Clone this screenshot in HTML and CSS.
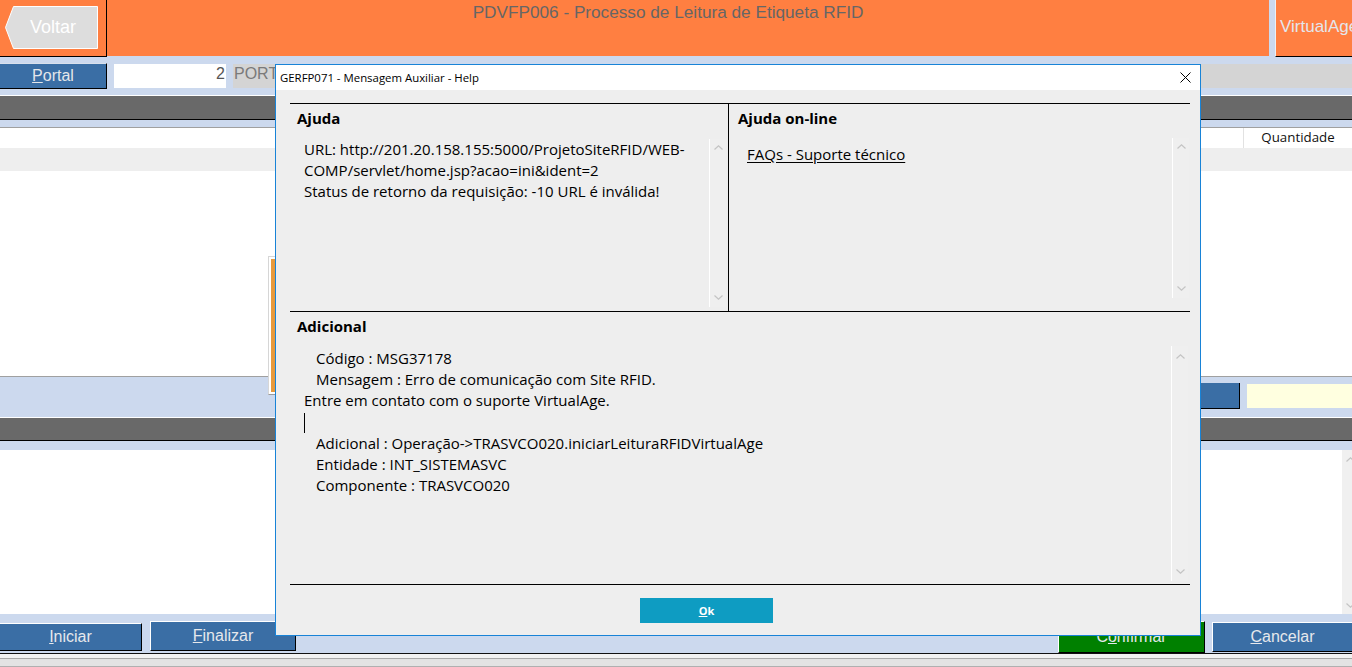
FILE: index.html
```html
<!DOCTYPE html>
<html lang="pt-BR">
<head>
<meta charset="utf-8">
<title>PDVFP006 - Processo de Leitura de Etiqueta RFID</title>
<link rel="stylesheet" href="styles.css">
</head>
<body>
<div class="app">
  <header class="topbar">
    <div class="back-block">
      <div class="back-btn">
        <svg class="back-shape" width="93" height="43" viewBox="0 0 93 43"><polygon points="8.5,0.5 92.5,0.5 92.5,42.5 8.5,42.5 0.5,21.5" fill="#dddddd" stroke="#ffffff" stroke-width="1"/></svg>
        <span class="back-label">Voltar</span>
      </div>
    </div>
    <div class="title-block"><h1 class="page-title">PDVFP006 - Processo de Leitura de Etiqueta RFID</h1></div>
    <div class="brand-block">VirtualAge</div>
  </header>

  <div class="portal-row">
    <div class="portal-btn"><u>P</u>ortal</div>
    <div class="num-field">2</div>
    <div class="desc-field">PORTAL</div>
  </div>

  <div class="dark-bar"></div>

  <div class="grid">
    <div class="grid-head"><div class="col-qty">Quantidade</div></div>
    <div class="grid-row"></div>
    <div class="grid-body"></div>
  </div>

  <div class="mid-row">
    <div class="mid-btn"></div>
    <div class="mid-input"></div>
  </div>

  <div class="dark-bar dark-bar-2"></div>

  <div class="list">
    <div class="list-scroll">
      <svg width="9" height="5" viewBox="0 0 9 5"><polyline points="0.5,4.5 4.5,0.8 8.5,4.5" fill="none" stroke="#c4c4c4" stroke-width="1.2"/></svg>
      <svg width="9" height="5" viewBox="0 0 9 5"><polyline points="0.5,0.5 4.5,4.2 8.5,0.5" fill="none" stroke="#c4c4c4" stroke-width="1.2"/></svg>
    </div>
  </div>

  <div class="actions">
    <div class="act-btn btn-iniciar"><u>I</u>niciar</div>
    <div class="act-btn btn-finalizar"><u>F</u>inalizar</div>
    <div class="act-spacer"></div>
    <div class="act-btn btn-confirmar">C<u>o</u>nfirmar</div>
    <div class="act-btn btn-cancelar"><u>C</u>ancelar</div>
  </div>

  <div class="statusbar"></div>
</div>

<div class="orange-panel"><div class="orange-fill"></div></div>

<div class="dialog">
  <div class="dlg-title">
    <span class="dlg-caption">GERFP071 - Mensagem Auxiliar - Help</span>
    <svg class="dlg-close" width="11" height="11" viewBox="0 0 11 11"><path d="M0.5 0.5 L10.5 10.5 M10.5 0.5 L0.5 10.5" stroke="#000" stroke-width="1" fill="none"/></svg>
  </div>
  <div class="dlg-body">
    <div class="panes">
      <section class="pane pane-left">
        <h2 class="sec-title">Ajuda</h2>
        <div class="textbox textbox-left">
          <div class="text-content">URL: http://201.20.158.155:5000/ProjetoSiteRFID/WEB-<br>COMP/servlet/home.jsp?acao=ini&amp;ident=2<br>Status de retorno da requisição: -10 URL é inválida!</div>
          <div class="vscroll">
            <svg width="9" height="5" viewBox="0 0 9 5"><polyline points="0.5,4.5 4.5,0.8 8.5,4.5" fill="none" stroke="#c4c4c4" stroke-width="1.2"/></svg>
            <svg width="9" height="5" viewBox="0 0 9 5"><polyline points="0.5,0.5 4.5,4.2 8.5,0.5" fill="none" stroke="#c4c4c4" stroke-width="1.2"/></svg>
          </div>
        </div>
      </section>
      <section class="pane pane-right">
        <h2 class="sec-title sec-title-right">Ajuda on-line</h2>
        <div class="textbox textbox-right">
          <div class="text-content link-content"><a class="faq-link" href="#">FAQs - Suporte técnico</a></div>
          <div class="vscroll">
            <svg width="9" height="5" viewBox="0 0 9 5"><polyline points="0.5,4.5 4.5,0.8 8.5,4.5" fill="none" stroke="#c4c4c4" stroke-width="1.2"/></svg>
            <svg width="9" height="5" viewBox="0 0 9 5"><polyline points="0.5,0.5 4.5,4.2 8.5,0.5" fill="none" stroke="#c4c4c4" stroke-width="1.2"/></svg>
          </div>
        </div>
      </section>
    </div>
    <section class="extra">
      <h2 class="sec-title extra-title">Adicional</h2>
      <div class="textbox textbox-extra">
        <div class="text-content extra-content">
          <div class="ind">Código : MSG37178</div>
          <div class="ind">Mensagem : Erro de comunicação com Site RFID.</div>
          <div>Entre em contato com o suporte VirtualAge.</div>
          <div><span class="caret"></span></div>
          <div class="ind">Adicional : Operação-&gt;TRASVCO020.iniciarLeituraRFIDVirtualAge</div>
          <div class="ind">Entidade : INT_SISTEMASVC</div>
          <div class="ind">Componente : TRASVCO020</div>
        </div>
        <div class="vscroll vscroll-extra">
          <svg width="9" height="5" viewBox="0 0 9 5"><polyline points="0.5,4.5 4.5,0.8 8.5,4.5" fill="none" stroke="#c4c4c4" stroke-width="1.2"/></svg>
          <svg width="9" height="5" viewBox="0 0 9 5"><polyline points="0.5,0.5 4.5,4.2 8.5,0.5" fill="none" stroke="#c4c4c4" stroke-width="1.2"/></svg>
        </div>
      </div>
    </section>
    <div class="dlg-foot">
      <div class="ok-btn"><u>O</u>k</div>
    </div>
  </div>
</div>
</body>
</html>
```

FILE: styles.css
```css
* { box-sizing: border-box; margin: 0; padding: 0; }

html, body {
  width: 1352px;
  height: 667px;
  overflow: hidden;
}

body {
  position: relative;
  font-family: "Liberation Sans", Arial, sans-serif;
  background: #ccd9ee;
}

.app {
  width: 1352px;
  height: 667px;
  display: flex;
  flex-direction: column;
  background: #ccd9ee;
  overflow: hidden;
}

/* ---------- header ---------- */
.topbar {
  display: flex;
  height: 57px;
  flex: none;
}

.back-block {
  width: 107px;
  height: 57px;
  background: #ff7f41;
  border-right: 1px solid #000;
  border-bottom: 1px solid #000;
  padding: 6px 0 0 5px;
}

.back-btn {
  position: relative;
  width: 93px;
  height: 43px;
  display: flex;
  align-items: center;
  justify-content: center;
}

.back-shape {
  position: absolute;
  left: 0;
  top: 0;
}

.back-label {
  position: relative;
  color: #ffffff;
  font-size: 18px;
  padding-left: 3px;
}

.title-block {
  flex: 1;
  height: 56px;
  background: #ff7f41;
  padding: 2px 40px 0 0;
  text-align: center;
}

.page-title {
  font-size: 17.2px;
  font-weight: normal;
  color: #666666;
  line-height: 20px;
}

.brand-block {
  width: 77px;
  height: 57px;
  margin-left: 6px;
  background: #ff7f41;
  border-left: 1px solid #eef0f4;
  border-bottom: 1px solid #000;
  padding-left: 4px;
  font-size: 17px;
  line-height: 54px;
  color: #e4e6ec;
  white-space: nowrap;
  overflow: hidden;
}

/* ---------- portal row ---------- */
.portal-row {
  display: flex;
  align-items: flex-start;
  height: 26px;
  margin-top: 6px;
  flex: none;
}

.portal-btn {
  width: 107px;
  height: 26px;
  background: #3a6ea5;
  border-top: 1px solid #d8e0ec;
  border-right: 1px solid #000;
  border-bottom: 1px solid #000;
  color: #e4e6ea;
  font-size: 16px;
  line-height: 24px;
  text-align: center;
}

.num-field {
  width: 112px;
  height: 24px;
  margin: 1px 0 0 7px;
  background: #ffffff;
  color: #555555;
  font-size: 16px;
  line-height: 20px;
  text-align: right;
  padding-right: 1px;
}

.desc-field {
  flex: 1;
  height: 24px;
  margin: 1px 0 0 7px;
  background: #d4d4d4;
  color: #7a7a7a;
  font-size: 16px;
  line-height: 20px;
  padding-left: 1px;
}

/* ---------- bars & grid ---------- */
.dark-bar {
  height: 25px;
  margin-top: 6px;
  flex: none;
  background: #696969;
  border-top: 1px solid #ffffff;
  border-bottom: 1px solid #000000;
}

.dark-bar-2 {
  height: 24px;
  margin-top: 0;
}

.grid {
  height: 250px;
  margin-top: 7px;
  flex: none;
  display: flex;
  flex-direction: column;
  background: #ffffff;
  border-top: 1px solid #a0a0a0;
  border-bottom: 1px solid #a0a0a0;
}

.grid-head {
  height: 20px;
  display: flex;
  justify-content: flex-end;
}

.col-qty {
  width: 109px;
  border-left: 1px solid #e2e2e2;
  font-family: "Open Sans", "Noto Sans", sans-serif;
  font-size: 13.3px;
  line-height: 19px;
  text-align: center;
  color: #111;
}

.grid-row {
  height: 23px;
  background: #eeeeee;
}

.grid-body { flex: 1; }

.mid-row {
  height: 40px;
  flex: none;
  display: flex;
  justify-content: flex-end;
  align-items: flex-start;
}

.mid-btn {
  width: 90px;
  height: 26px;
  margin-top: 6px;
  background: #3a6ea5;
  border-right: 1px solid #000;
  border-bottom: 1px solid #000;
}

.mid-input {
  width: 105px;
  height: 24px;
  margin: 7px 0 0 7px;
  background: #ffffe0;
}

.list {
  height: 164px;
  margin-top: 9px;
  margin-right: -7px;
  flex: none;
  display: flex;
  justify-content: flex-end;
  background: #ffffff;
}

.list-scroll {
  width: 17px;
  background: #f0f0f0;
  display: flex;
  flex-direction: column;
  justify-content: space-between;
  align-items: center;
  padding: 7px 0 6px;
}

/* ---------- action buttons ---------- */
.actions {
  height: 32px;
  margin-top: 7px;
  flex: none;
  display: flex;
  align-items: flex-start;
}

.act-btn {
  background: #3a6ea5;
  border-top: 1px solid #ffffff;
  border-left: 1px solid #ffffff;
  border-right: 1px solid #000000;
  border-bottom: 1px solid #000000;
  color: #e6e8ec;
  font-size: 16px;
  text-align: center;
}

.btn-iniciar {
  width: 142px;
  height: 28px;
  margin-top: 2px;
  line-height: 26px;
  border-left: none;
}

.btn-finalizar {
  width: 146px;
  height: 30px;
  margin-left: 8px;
  line-height: 28px;
}

.act-spacer { flex: 1; }

.btn-confirmar {
  width: 147px;
  height: 32px;
  background: #008000;
  line-height: 30px;
}

.btn-cancelar {
  width: 140px;
  height: 30px;
  margin: 1px 0 0 7px;
  line-height: 28px;
  border-right: none;
}

.statusbar {
  height: 14px;
  flex: none;
  border-top: 1px solid #111111;
  background: linear-gradient(#f2f2f2 0 4px, #a8a8a8 4px 5px, #e3e3e3 5px 12px, #b0b0b0 12px 13px);
}

/* ---------- orange panel behind the dialog ---------- */
.orange-panel {
  position: absolute;
  left: 268px;
  top: 256px;
  width: 60px;
  height: 139px;
  background: #ffffff;
  border: 1px solid #d6d6d6;
  border-bottom-color: #9a9a9a;
  padding: 2px;
}

.orange-fill {
  width: 100%;
  height: 100%;
  background: #e89a3c;
}

/* ---------- dialog ---------- */
.dialog {
  position: absolute;
  left: 275px;
  top: 64px;
  width: 926px;
  height: 572px;
  border: 1px solid #1883d7;
  background: #eeeeee;
  font-family: "Open Sans", "Noto Sans", sans-serif;
  color: #000;
  display: flex;
  flex-direction: column;
}

.dlg-title {
  height: 25px;
  flex: none;
  background: #ffffff;
  display: flex;
  align-items: center;
  padding-left: 4px;
}

.dlg-caption {
  font-size: 11.4px;
  color: #000;
}

.dlg-close {
  margin-left: auto;
  margin-right: 9px;
}

.dlg-body {
  flex: 1;
  display: flex;
  flex-direction: column;
  padding: 13px 10px 0 14px;
}

.panes {
  height: 209px;
  flex: none;
  display: flex;
  border-top: 1px solid #000;
  border-bottom: 1px solid #000;
}

.pane {
  display: flex;
  flex-direction: column;
}

.pane-left {
  width: 439px;
  border-right: 1px solid #000;
  padding: 4px 2px 0 7px;
}

.pane-right {
  flex: 1;
  padding: 4px 1px 0 9px;
}

.sec-title {
  font-size: 15px;
  font-weight: bold;
  line-height: 21px;
  margin-bottom: 10px;
}

.sec-title-right { margin-bottom: 9px; }

.textbox {
  display: flex;
}

.textbox-left { height: 168px; }
.textbox-right { height: 160px; }

.text-content {
  flex: 1;
  font-size: 15px;
  line-height: 21px;
  padding-left: 7px;
  white-space: nowrap;
}

.link-content {
  padding: 6px 0 0 9px;
}

.faq-link {
  color: #000;
  text-decoration: underline;
  text-underline-offset: 2px;
}

.vscroll {
  width: 17px;
  flex: none;
  border-left: 1px solid #ffffff;
  background: #efefef;
  display: flex;
  flex-direction: column;
  justify-content: space-between;
  align-items: center;
  padding: 6px 0 7px;
}

.extra {
  height: 273px;
  flex: none;
  border-bottom: 1px solid #000;
  padding: 4px 2px 0 7px;
  display: flex;
  flex-direction: column;
}

.extra-title { margin-bottom: 9px; }

.textbox-extra { height: 235px; }

.extra-content { padding-top: 2px; }

.ind { padding-left: 12px; }

.caret {
  display: inline-block;
  width: 1px;
  height: 20px;
  background: #000;
  vertical-align: middle;
}

.vscroll-extra { padding: 8px 0 7px; }

.dlg-foot {
  flex: 1;
  padding: 13px 0 0 350px;
}

.ok-btn {
  width: 133px;
  height: 25px;
  background: #0e9cc2;
  color: #ffffff;
  font-size: 11px;
  font-weight: bold;
  line-height: 25px;
  text-align: center;
}
```
